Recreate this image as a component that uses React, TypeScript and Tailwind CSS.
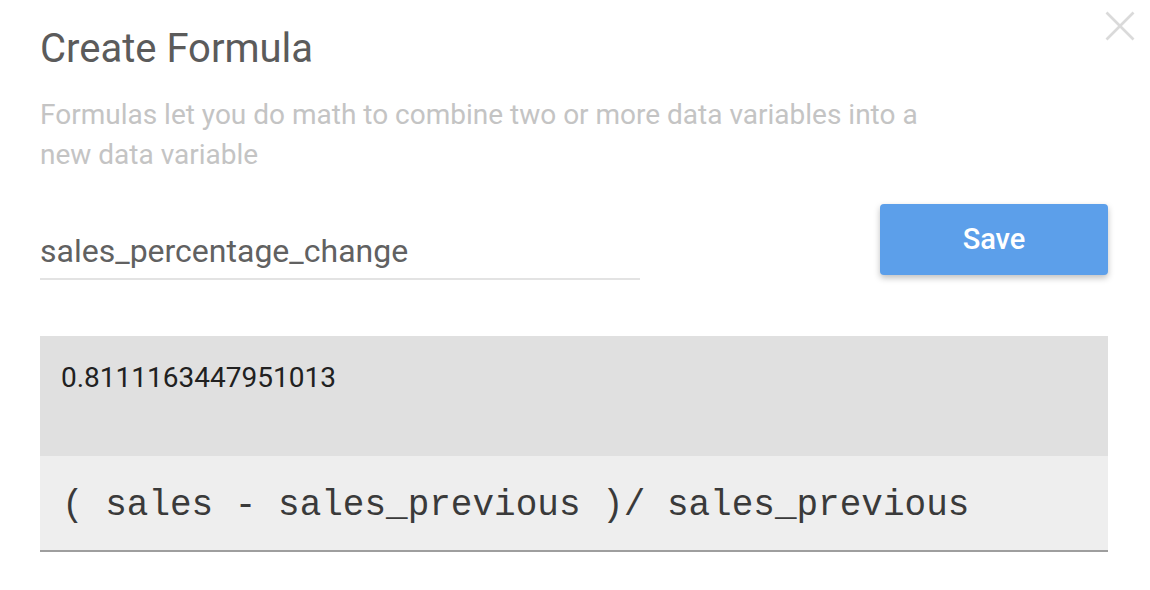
const FORMULA = "( sales - sales_previous )/ sales_previous";

export default function App() {
  return (
    <div className="relative min-h-[590px] w-full bg-white px-[40px] pt-[25px] pr-[42px] font-[Roboto,sans-serif]">
      <button
        type="button"
        aria-label="Close"
        className="absolute right-[14px] top-[10px] flex h-[32px] w-[32px] items-center justify-center text-[#dadada]"
      >
        <svg width="30" height="30" viewBox="0 0 30 30" fill="none" stroke="currentColor" strokeWidth="2.6">
          <line x1="1.5" y1="1.5" x2="28.5" y2="28.5" />
          <line x1="28.5" y1="1.5" x2="1.5" y2="28.5" />
        </svg>
      </button>

      <h1 className="text-[40px] leading-[48px] text-[#5b5b5b]">Create Formula</h1>

      <p className="mt-[22px] max-w-[900px] text-[28px] leading-[40px] text-[#c4c4c4]">
        Formulas let you do math to combine two or more data variables into a new data variable
      </p>

      <div className="mt-[29px] flex items-start justify-between">
        <div className="mt-[27px] w-[600px] border-b-2 border-[#e3e3e3] pb-[7px]">
          <input
            className="w-full bg-transparent text-[32px] leading-[40px] text-[#616161] outline-none"
            defaultValue="sales_percentage_change"
          />
        </div>
        <button
          type="button"
          className="h-[71px] w-[228px] rounded-[4px] bg-[#5c9fea] text-[29px] font-medium text-white shadow-[0_3px_6px_rgba(0,0,0,0.25)]"
        >
          Save
        </button>
      </div>

      <div className="mt-[56px] h-[120px] bg-[#e0e0e0] pl-[21px] pt-[26px]">
        <p className="text-[28px] leading-[32px] text-[#212121]">0.8111163447951013</p>
      </div>

      <div className="flex h-[96px] items-center border-b-2 border-[#9e9e9e] bg-[#eeeeee] pl-[22px] pt-[6px]">
        <p className="whitespace-pre font-['Liberation_Mono',monospace] text-[36px] leading-[40px] text-[#3a3a3a]">
          {FORMULA}
        </p>
      </div>
    </div>
  );
}
